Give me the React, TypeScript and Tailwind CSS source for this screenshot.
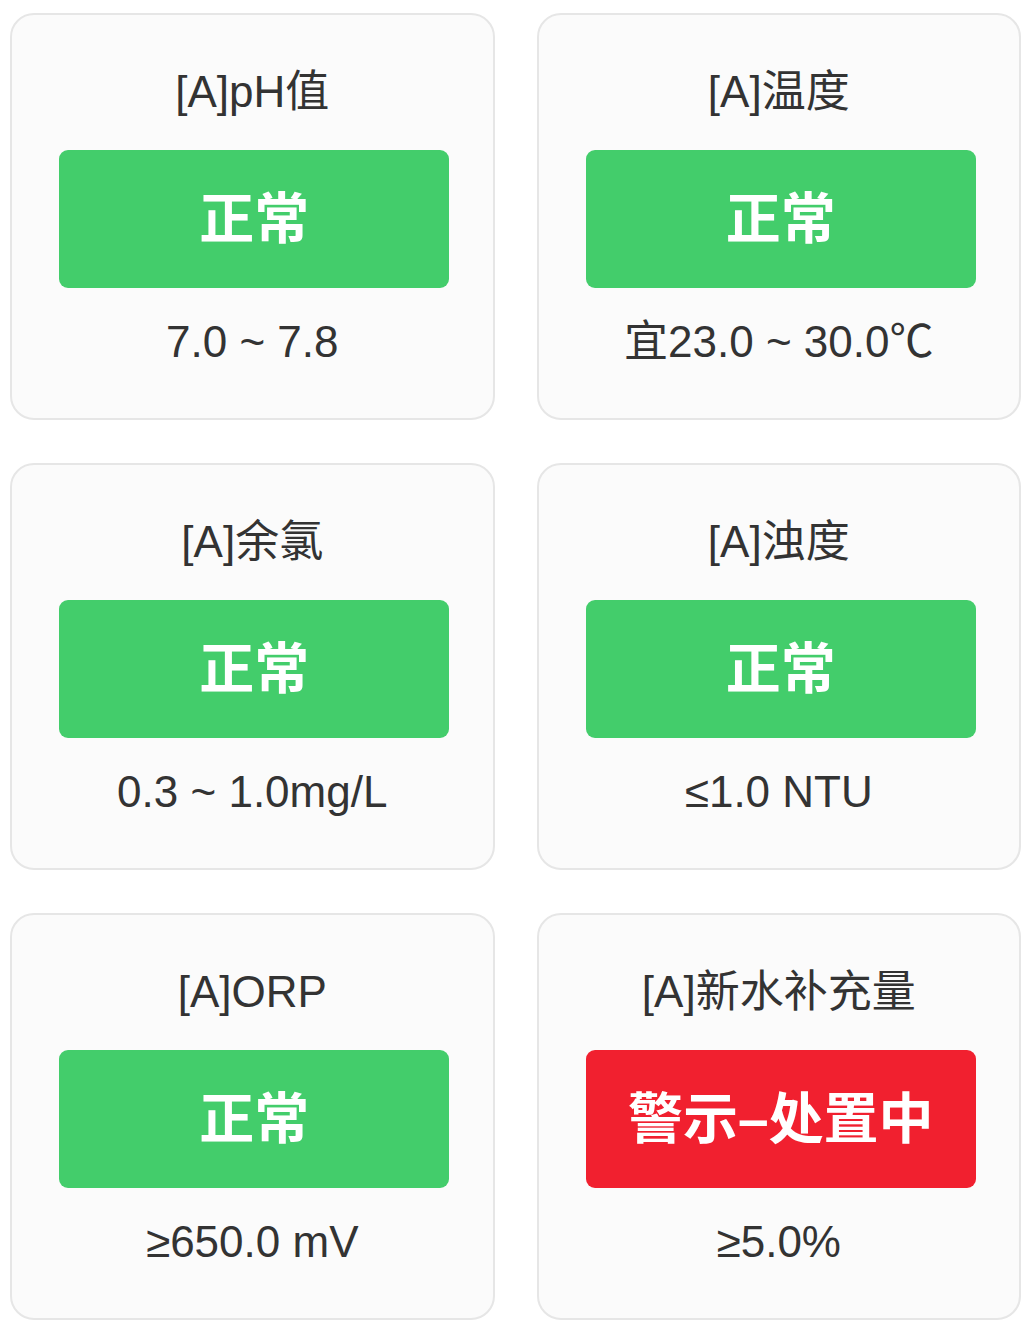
import React from 'react'

type Item = { title: string; status: string; range: string; alert?: boolean }

const items: Item[] = [
  { title: '[A]pH值', status: '正常', range: '7.0 ~ 7.8' },
  { title: '[A]温度', status: '正常', range: '宜23.0 ~ 30.0℃' },
  { title: '[A]余氯', status: '正常', range: '0.3 ~ 1.0mg/L' },
  { title: '[A]浊度', status: '正常', range: '≤1.0 NTU' },
  { title: '[A]ORP', status: '正常', range: '≥650.0 mV' },
  { title: '[A]新水补充量', status: '警示–处置中', range: '≥5.0%', alert: true },
]

function StatusCard({ item }: { item: Item }) {
  return (
    <div className="h-[407px] rounded-[24px] border-2 border-[#e6e6e6] bg-[#fbfbfb] flex flex-col items-center pt-[52px]">
      <div className="h-[50px] leading-[50px] text-[44px] text-[#333333]">{item.title}</div>
      <div
        className={`mt-[33px] ml-[4px] w-[390px] h-[138px] rounded-[9px] flex items-center justify-center text-white font-bold text-[55px] ${
          item.alert ? 'bg-[#f1202f]' : 'bg-[#43cd6b]'
        }`}
      >
        {item.status}
      </div>
      <div className="mt-[29px] h-[50px] leading-[50px] text-[44px] text-[#333333]">{item.range}</div>
    </div>
  )
}

export default function App() {
  return (
    <div
      className="min-h-screen bg-white pl-[10px] pr-[8px] pt-[13px] pb-[19px]"
      style={{ fontFamily: '"Liberation Sans", "Noto Sans CJK SC", sans-serif' }}
    >
      <div className="grid grid-cols-2 gap-x-[42px] gap-y-[43px]">
        {items.map((item) => (
          <StatusCard key={item.title} item={item} />
        ))}
      </div>
    </div>
  )
}
